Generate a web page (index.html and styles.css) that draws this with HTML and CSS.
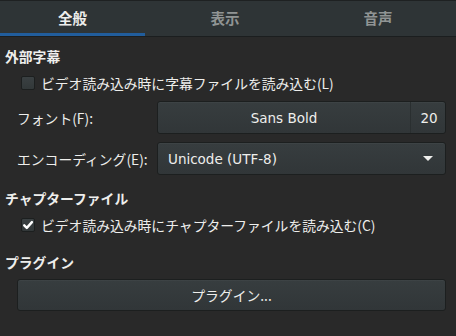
FILE: index.html
```html
<!DOCTYPE html>
<html lang="ja">
<head>
    <meta charset="UTF-8">
    <meta name="viewport" content="width=device-width, initial-scale=1.0">
    <title>設定</title>
    <link rel="stylesheet" href="styles.css">
</head>
<body>
    <div class="tabs">
        <div class="tab active">全般</div>
        <div class="tab">表示</div>
        <div class="tab">音声</div>
    </div>
    <div class="page">
        <h2 class="section first">外部字幕</h2>
        <label class="check">
            <span class="box"></span>
            <span>ビデオ読み込み時に字幕ファイルを読み込む(L)</span>
        </label>

        <div class="row font-row">
            <span class="row-label">フォント(F):</span>
            <div class="button font-button">
                <span class="font-name">Sans Bold</span>
                <span class="font-size">20</span>
            </div>
        </div>
        <div class="row combo-row">
            <span class="row-label">エンコーディング(E):</span>
            <div class="button combo">
                <span>Unicode (UTF-8)</span>
                <span class="arrow"></span>
            </div>
        </div>

        <h2 class="section chapter">チャプターファイル</h2>
        <label class="check">
            <span class="box checked">
                <svg width="14" height="14" viewBox="0 0 14 14"><path d="M2.6 7.4 L5.6 10.4 L11.6 3.6" fill="none" stroke="#ffffff" stroke-width="2.8" stroke-linecap="round" stroke-linejoin="round"/></svg>
            </span>
            <span>ビデオ読み込み時にチャプターファイルを読み込む(C)</span>
        </label>

        <h2 class="section plugins">プラグイン</h2>
        <div class="button plugin-button">プラグイン...</div>
    </div>
</body>
</html>
```

FILE: styles.css
```css
body {
    margin: 0;
    padding: 0;
    width: 456px;
    height: 336px;
    overflow: hidden;
    background-color: #292929;
    color: #eeeeec;
    font-family: "DejaVu Sans", "Noto Sans CJK JP", sans-serif;
    font-size: 13.5px;
}

.tabs {
    display: grid;
    grid-template-columns: 145px 146px 146px;
    column-gap: 7px;
    height: 35px;
    background-color: #2e3436;
    border-top: 1px solid #1e2122;
    border-bottom: 1px solid #1b1e1f;
}

.tab {
    display: flex;
    align-items: center;
    justify-content: center;
    font-family: "Noto Sans CJK JP", sans-serif;
    font-weight: bold;
    font-size: 14.5px;
    color: #909494;
    border-bottom: 3px solid transparent;
    padding-top: 1px;
}

.tab.active {
    color: #eeeeec;
    border-bottom-color: #215d9c;
}

.page {
    display: flex;
    flex-direction: column;
    padding: 0 10px 0 5px;
}

.section {
    margin: 0;
    font-family: "Noto Sans CJK JP", sans-serif;
    font-size: 13.8px;
    font-weight: bold;
    line-height: 20px;
    height: 20px;
}

.section.first {
    margin-top: 9px;
}

.section.chapter {
    margin-top: 13px;
}

.section.plugins {
    margin-top: 20px;
}

.check {
    display: flex;
    align-items: center;
    gap: 6px;
    margin-top: 10px;
    margin-left: 16px;
    height: 14px;
    font-family: "Noto Sans CJK JP", sans-serif;
    font-size: 13.8px;
    line-height: 14px;
}

.box {
    width: 14px;
    height: 14px;
    box-sizing: border-box;
    border: 1px solid #1c1f1f;
    border-radius: 2px;
    background: linear-gradient(#3a4042, #323839);
    display: flex;
    align-items: center;
    justify-content: center;
    flex-shrink: 0;
}

.box svg {
    display: block;
}

.row {
    display: flex;
    align-items: center;
}

.font-row {
    margin-top: 11px;
}

.combo-row {
    margin-top: 8px;
}

.row-label {
    width: 140px;
    padding-left: 12px;
    font-family: "Noto Sans CJK JP", sans-serif;
    font-size: 13.8px;
}

.button {
    box-sizing: border-box;
    height: 33px;
    border: 1px solid #1c1f1f;
    border-radius: 3px;
    background: linear-gradient(#373d3f, #313638);
    box-shadow: inset 0 1px rgba(255, 255, 255, 0.03);
    display: flex;
    align-items: center;
}

.font-button {
    flex: 1;
}

.font-name {
    flex: 1;
    text-align: center;
}

.font-size {
    width: 35px;
    height: 100%;
    display: flex;
    align-items: center;
    justify-content: center;
    border-left: 1px solid #2a2f30;
    padding-left: 2px;
    box-sizing: border-box;
}

.combo {
    flex: 1;
    justify-content: space-between;
    padding: 0 12px 0 10px;
}

.arrow {
    width: 0;
    height: 0;
    border-left: 5px solid transparent;
    border-right: 5px solid transparent;
    border-top: 5px solid #eeeeec;
}

.plugin-button {
    margin-top: 7px;
    margin-left: 12px;
    height: 32px;
    justify-content: center;
    font-family: "Noto Sans CJK JP", sans-serif;
    font-size: 13.8px;
}
```
